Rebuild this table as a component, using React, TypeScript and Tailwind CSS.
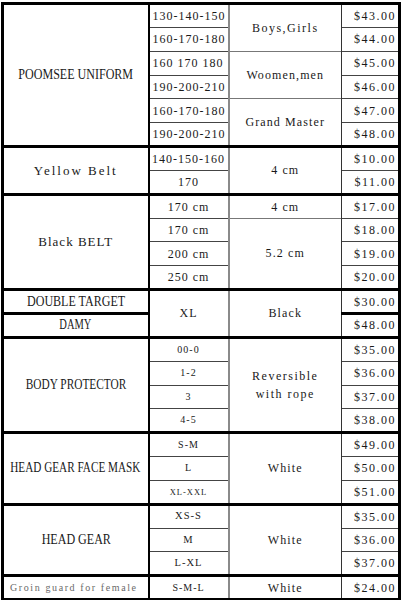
import React from 'react'

type Cell = { text: React.ReactNode; span?: number; cls?: string; left?: boolean; inner?: string }

type Row = {
  first?: boolean
  name?: Cell
  size?: Cell
  note?: Cell
  price: string
  thickBelow?: boolean
}

const rows: Row[] = [
  { first: true, name: { text: 'POOMSEE UNIFORM', span: 6, inner: 'text-[14px] scale-x-[0.86]' }, size: { text: '130-140-150', left: true }, note: { text: 'Boys,Girls', span: 2, cls: 'tracking-[1.5px]' }, price: '$43.00' },
  { size: { text: '160-170-180', left: true }, price: '$44.00' },
  { size: { text: '160 170 180', left: true, cls: 'tracking-[1.2px]' }, note: { text: 'Woomen,men', span: 2, cls: 'tracking-[0px]' }, price: '$45.00' },
  { size: { text: '190-200-210', left: true }, price: '$46.00' },
  { size: { text: '160-170-180', left: true }, note: { text: 'Grand Master', span: 2 }, price: '$47.00' },
  { size: { text: '190-200-210', left: true }, price: '$48.00' },

  { first: true, name: { text: 'Yellow Belt', span: 2, cls: 'text-[13px] tracking-[2px]' }, size: { text: '140-150-160' }, note: { text: '4 cm', span: 2 }, price: '$10.00' },
  { size: { text: '170' }, price: '$11.00' },

  { first: true, name: { text: 'Black BELT', span: 4, cls: 'text-[13px] tracking-[1px]' }, size: { text: '170 cm', cls: 'tracking-[0.8px]' }, note: { text: '4 cm', span: 1 }, price: '$17.00' },
  { size: { text: '170 cm', cls: 'tracking-[0.8px]' }, note: { text: '5.2 cm', span: 3 }, price: '$18.00' },
  { size: { text: '200 cm', cls: 'tracking-[0.8px]' }, price: '$19.00' },
  { size: { text: '250 cm', cls: 'tracking-[0.8px]' }, price: '$20.00' },

  { first: true, name: { text: 'DOUBLE TARGET', span: 1, inner: 'text-[14px] scale-x-[0.86]' }, size: { text: 'XL', span: 2 }, note: { text: 'Black', span: 2 }, price: '$30.00', thickBelow: true },
  { name: { text: 'DAMY', span: 1, inner: 'text-[14px] scale-x-[0.75]' }, price: '$48.00' },

  { first: true, name: { text: 'BODY PROTECTOR', span: 4, inner: 'text-[14px] scale-x-[0.81]' }, size: { text: '00-0', cls: 'text-[10px] tracking-[1px]' }, note: { text: <>Reversible<br />with rope</>, span: 4, cls: 'tracking-[1.5px] leading-[18px]' }, price: '$35.00' },
  { size: { text: '1-2', cls: 'text-[10px] tracking-[1px]' }, price: '$36.00' },
  { size: { text: '3', cls: 'text-[10px]' }, price: '$37.00' },
  { size: { text: '4-5', cls: 'text-[10px] tracking-[1px]' }, price: '$38.00' },

  { first: true, name: { text: 'HEAD GEAR FACE MASK', span: 3, inner: 'text-[14px] scale-x-[0.8]' }, size: { text: 'S-M', cls: 'text-[10px] tracking-[0.4px]' }, note: { text: 'White', span: 3 }, price: '$49.00' },
  { size: { text: 'L', cls: 'text-[10px]' }, price: '$50.00' },
  { size: { text: 'XL-XXL', cls: 'text-[8.5px] tracking-[-0.2px]' }, price: '$51.00' },

  { first: true, name: { text: 'HEAD GEAR', span: 3, inner: 'text-[14px] scale-x-[0.86]' }, size: { text: 'XS-S', cls: 'text-[10.5px] tracking-[0.6px]' }, note: { text: 'White', span: 3 }, price: '$35.00' },
  { size: { text: 'M', cls: 'text-[10.5px]' }, price: '$36.00' },
  { size: { text: 'L-XL', cls: 'text-[10.5px] tracking-[0.4px]' }, price: '$37.00' },

  { first: true, name: { text: 'Groin guard for female', span: 1, cls: 'text-[10px] tracking-[1.6px] text-[#6a6a6a] text-left pl-[6px]' }, size: { text: 'S-M-L', cls: 'text-[10px]' }, note: { text: 'White', span: 1 }, price: '$24.00' },
]

export default function App() {
  return (
    <div className="w-[404px] h-[600px] bg-white pt-[2px] pl-[1px] overflow-hidden">
      <table
        className="w-[400px] table-fixed border-collapse border-[3px] border-black text-[12px] leading-none text-[#1a1a1a]"
        style={{ fontFamily: '"Liberation Serif", "DejaVu Serif", serif' }}
      >
        <colgroup>
          <col className="w-[146px]" />
          <col className="w-[80px]" />
          <col className="w-[113px]" />
          <col className="w-[58px]" />
        </colgroup>
        <tbody>
          {rows.map((r, i) => {
            const top = r.first ? 'border-t-[3px] border-t-black' : 'border-t border-t-[#444]'
            return (
              <tr key={i} className="h-[23.85px]">
                {r.name && (
                  <td
                    rowSpan={r.name.span ?? 1}
                    className={`${top} ${r.thickBelow ? 'border-b-[3px] border-b-black' : ''} border-r-2 border-r-black text-center p-0 whitespace-nowrap ${r.name.cls ?? ''}`}
                  >
                    {r.name.inner ? (
                      <div className="flex justify-center">
                        <span className={`shrink-0 inline-block origin-center ${r.name.inner}`}>{r.name.text}</span>
                      </div>
                    ) : (
                      r.name.text
                    )}
                  </td>
                )}
                {r.size && (
                  <td
                    rowSpan={r.size.span ?? 1}
                    className={`${top} border-r-2 border-r-[#8a8a8a] p-0 whitespace-nowrap tracking-[1px] ${r.size.left ? 'text-left pl-[3px]' : 'text-center'} ${r.size.cls ?? ''}`}
                  >
                    {r.size.text}
                  </td>
                )}
                {r.note && (
                  <td
                    rowSpan={r.note.span ?? 1}
                    className={`${top} ${r.first ? '' : 'border-t-[#777]'} border-r border-r-[#333] text-center p-0 whitespace-nowrap tracking-[1.1px] ${r.note.cls ?? ''}`}
                  >
                    {r.note.text}
                  </td>
                )}
                <td
                  className={`${top} ${r.thickBelow ? 'border-b-[3px] border-b-black' : ''} text-right pr-[2px] p-0 whitespace-nowrap tracking-[1.5px]`}
                >
                  {r.price}
                </td>
              </tr>
            )
          })}
        </tbody>
      </table>
    </div>
  )
}
